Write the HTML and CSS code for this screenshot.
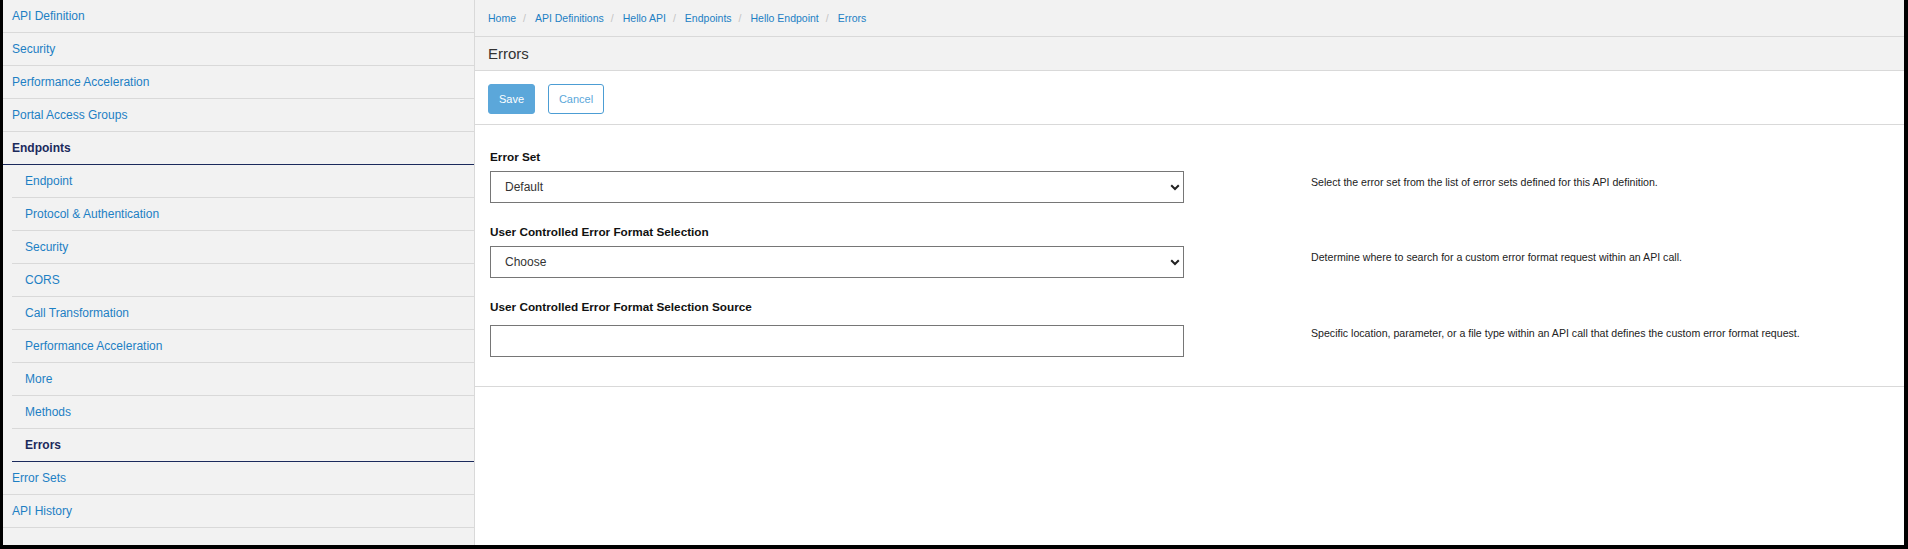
FILE: index.html
```html
<!DOCTYPE html>
<html lang="en">
<head>
<meta charset="utf-8">
<title>Errors</title>
<link rel="stylesheet" href="styles.css">
</head>
<body>
<div class="app">
  <nav class="sidebar">
    <ul class="nav">
      <li><a href="#">API Definition</a></li>
      <li><a href="#">Security</a></li>
      <li><a href="#">Performance Acceleration</a></li>
      <li><a href="#">Portal Access Groups</a></li>
      <li>
        <a href="#" class="active">Endpoints</a>
        <ul class="nav subnav">
          <li><a href="#">Endpoint</a></li>
          <li><a href="#">Protocol &amp; Authentication</a></li>
          <li><a href="#">Security</a></li>
          <li><a href="#">CORS</a></li>
          <li><a href="#">Call Transformation</a></li>
          <li><a href="#">Performance Acceleration</a></li>
          <li><a href="#">More</a></li>
          <li><a href="#">Methods</a></li>
          <li><a href="#" class="active">Errors</a></li>
        </ul>
      </li>
      <li><a href="#">Error Sets</a></li>
      <li><a href="#">API History</a></li>
    </ul>
  </nav>
  <main class="main">
    <div class="breadcrumb">
      <a href="#">Home</a><span class="sep">/</span>
      <a href="#">API Definitions</a><span class="sep">/</span>
      <a href="#">Hello API</a><span class="sep">/</span>
      <a href="#">Endpoints</a><span class="sep">/</span>
      <a href="#">Hello Endpoint</a><span class="sep">/</span>
      <a href="#">Errors</a>
    </div>
    <div class="title">Errors</div>
    <div class="actions">
      <button class="btn btn-primary" type="button">Save</button>
      <button class="btn btn-outline" type="button">Cancel</button>
    </div>
    <form class="form">
      <div class="row">
        <div class="field">
          <label class="label">Error Set</label>
          <div class="select-wrap">
            <select class="control"><option>Default</option></select>
            <svg class="chev" width="10" height="7" viewBox="0 0 10 7"><path d="M1.2 1.2 L5 5 L8.8 1.2" fill="none" stroke="#222" stroke-width="2"/></svg>
          </div>
        </div>
        <p class="help">Select the error set from the list of error sets defined for this API definition.</p>
      </div>
      <div class="row">
        <div class="field">
          <label class="label">User Controlled Error Format Selection</label>
          <div class="select-wrap">
            <select class="control"><option>Choose</option></select>
            <svg class="chev" width="10" height="7" viewBox="0 0 10 7"><path d="M1.2 1.2 L5 5 L8.8 1.2" fill="none" stroke="#222" stroke-width="2"/></svg>
          </div>
        </div>
        <p class="help">Determine where to search for a custom error format request within an API call.</p>
      </div>
      <div class="row">
        <div class="field">
          <label class="label label-input">User Controlled Error Format Selection Source</label>
          <input class="control" type="text">
        </div>
        <p class="help help-input">Specific location, parameter, or a file type within an API call that defines the custom error format request.</p>
      </div>
    </form>
  </main>
</div>
</body>
</html>
```
FILE: styles.css
```css
* { box-sizing: border-box; }
html, body { margin: 0; padding: 0; }
body {
  background: #000;
  height: 549px;
  overflow: hidden;
  font-family: "Liberation Sans", Arial, sans-serif;
}
.app {
  display: flex;
  height: 545px;
  margin: 0 4px 0 3px;
}
.sidebar {
  width: 472px;
  flex: none;
  background: #f2f2f2;
  border-right: 1px solid #d9d9d9;
}
.nav { list-style: none; margin: 0; padding: 0; }
.nav a {
  display: block;
  height: 33px;
  line-height: 32px;
  padding-left: 9px;
  border-bottom: 1px solid #d9d9d9;
  color: #1d80c4;
  text-decoration: none;
  font-size: 12px;
}
.nav a.active {
  color: #1b2a5c;
  font-weight: bold;
  border-bottom-color: #1b2a5c;
}
.subnav { margin-left: 9px; }
.subnav a { padding-left: 13px; }
.main {
  flex: 1;
  background: #fff;
  display: flex;
  flex-direction: column;
}
.breadcrumb {
  height: 37px;
  background: #f2f2f2;
  border-bottom: 1px solid #d9d9d9;
  padding-left: 13px;
  display: flex;
  align-items: center;
  font-size: 10.5px;
}
.breadcrumb a { color: #1d80c4; text-decoration: none; }
.breadcrumb .sep { color: #c4c4c4; padding: 0 9px 0 7px; }
.title {
  height: 34px;
  line-height: 33px;
  background: #f2f2f2;
  border-bottom: 1px solid #d9d9d9;
  padding-left: 13px;
  font-size: 15px;
  color: #333;
}
.actions {
  display: flex;
  gap: 13px;
  padding: 13px 13px 10px;
  border-bottom: 1px solid #d9d9d9;
}
.btn {
  height: 30px;
  border-radius: 3px;
  font-family: "Liberation Sans", Arial, sans-serif;
  font-size: 11px;
  padding: 0;
  cursor: pointer;
}
.btn-primary {
  width: 47px;
  background: #5ba7da;
  border: 1px solid #5ba7da;
  color: #fff;
}
.btn-outline {
  width: 56px;
  background: #fff;
  border: 1px solid #4c9dd4;
  color: #5ba7da;
}
.form {
  display: flex;
  flex-direction: column;
  gap: 22px;
  padding: 25px 15px 29px;
  border-bottom: 1px solid #d9d9d9;
}
.row {
  display: grid;
  grid-template-columns: 694px 1fr;
  column-gap: 127px;
}
.label {
  display: block;
  line-height: 14px;
  margin-bottom: 7px;
  font-weight: bold;
  font-size: 11.75px;
  color: #111;
}
.label-input { margin-bottom: 11px; }
.select-wrap { position: relative; }
.control {
  display: block;
  width: 694px;
  height: 32px;
  border: 1px solid #767676;
  border-radius: 0;
  background: #fff;
  padding: 0 0 0 14px;
  font-family: "Liberation Sans", Arial, sans-serif;
  font-size: 12px;
  color: #333;
  -webkit-appearance: none;
  appearance: none;
  outline: none;
}
.chev {
  position: absolute;
  right: 4px;
  top: 13px;
  pointer-events: none;
}
.help {
  align-self: end;
  margin: 0 0 15px;
  line-height: 12px;
  font-size: 10.6px;
  color: #222;
}
.help-input { margin-bottom: 18px; }
```
